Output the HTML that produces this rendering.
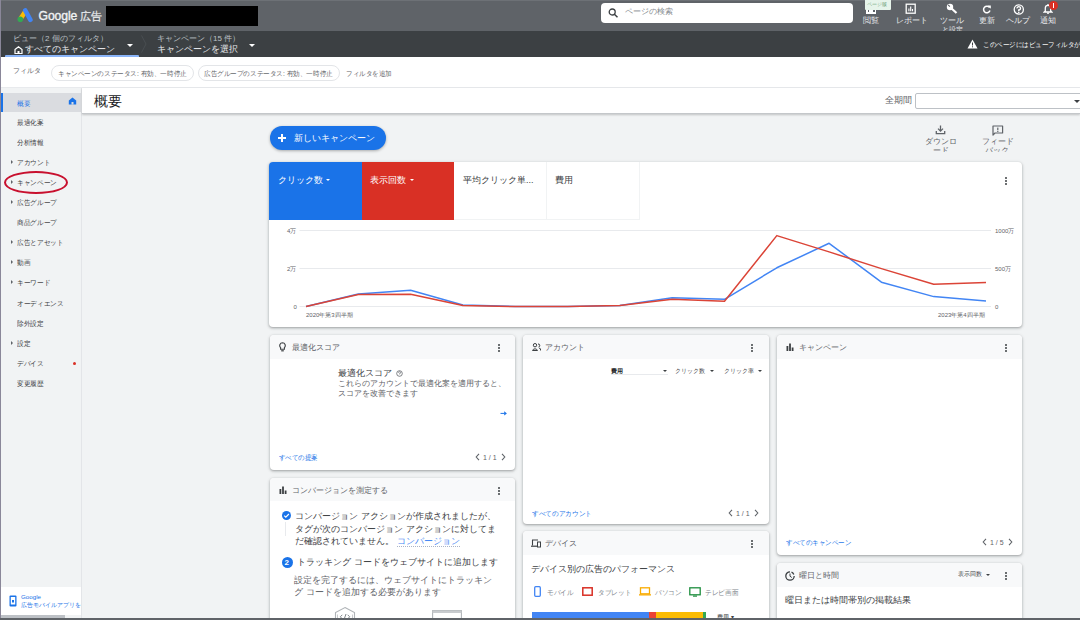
<!DOCTYPE html>
<html><head><meta charset="utf-8">
<style>
*{box-sizing:border-box;margin:0;padding:0}
html,body{width:1080px;height:620px;overflow:hidden;background:#f1f3f4;font-family:"Liberation Sans",sans-serif;color:#3c4043;position:relative}
div,span,svg{position:absolute}
.t{white-space:nowrap;line-height:1}
#top{left:0;top:0;width:1080px;height:31px;background:#5f6368}
#sub{left:0;top:31px;width:1080px;height:26px;background:#3c4043}
#filt{left:0;top:57px;width:1080px;height:31px;background:#fff;border-bottom:1px solid #e8eaed}
#side{left:0;top:88px;width:82px;height:532px;background:#f1f3f4;border-right:1px solid #e3e5e8}
#title{left:82px;top:88px;width:998px;height:26px;background:#fff;border-bottom:1px solid #c4c7ca;box-shadow:0 1px 2px rgba(0,0,0,.2)}
.card{background:#fff;border-radius:4px;box-shadow:0 1px 2px rgba(60,64,67,.3),0 1px 3px 1px rgba(60,64,67,.15);overflow:hidden}
.hd{left:0;top:0;right:0;height:23.5px;background:#f8f9fa}
.hdt{font-size:8.3px;color:#5f6368;top:8px}
.menu{width:2px;height:9px;top:8px}
.menu i{position:absolute;left:0;width:2.2px;height:2.2px;border-radius:50%;background:#3c4043}
.chip{height:16px;border:1px solid #e3e5e8;border-radius:8px}
.sx{transform-origin:0 0}
.nav{left:17px;font-size:6.5px;color:#3c4043;transform:scaleX(.95);transform-origin:0 0}
.arr{left:11px;width:0;height:0;border-left:2.5px solid #5f6368;border-top:2px solid transparent;border-bottom:2px solid transparent}
.hl{font-size:8px;color:#e8eaed;top:17px}
.link{color:#1a73e8}
</style></head><body>
<!-- top bar -->
<div id="top"></div>
<div style="left:0;top:0;width:1080px;height:1px;background:#6d7176"></div>
<svg style="left:17px;top:8px" width="17" height="16" viewBox="0 0 17 16">
 <path d="M6.2 2.6 L1.6 9.6 L5.5 12 L9.8 5.2 Z" fill="#fbbc04"/>
 <path d="M8.2 2.4 L13.4 11.8" stroke="#4285f4" stroke-width="4.6" stroke-linecap="round"/>
 <circle cx="3.3" cy="11.2" r="2.8" fill="#34a853"/>
</svg>
<div class="t" style="left:38.5px;top:9.5px;font-size:12.2px;color:#f1f3f4;-webkit-text-stroke:0.35px #f1f3f4;letter-spacing:-0.1px">Google</div><div class="t" style="left:80px;top:10.5px;font-size:11px;color:#e8eaed;-webkit-text-stroke:0.2px #e8eaed">広告</div>
<div style="left:106px;top:6px;width:152px;height:20px;background:#000"></div>
<div style="left:601px;top:3px;width:252px;height:20px;background:#fff;border-radius:4px"></div>
<svg style="left:608px;top:8px" width="11" height="10" viewBox="0 0 11 10"><circle cx="4.2" cy="4" r="3" stroke="#3c4043" stroke-width="1.3" fill="none"/><path d="M6.4 6.2 L9.5 9.2" stroke="#3c4043" stroke-width="1.5"/></svg>
<div class="t" style="left:625px;top:8px;font-size:8px;color:#80868b">ページの検索</div>
<!-- header icons -->
<div style="left:866px;top:9px;width:10px;height:5px;background:#fff"></div>
<div style="left:867.5px;top:9.5px;width:1.8px;height:2px;background:#5f6368"></div>
<div style="left:873px;top:9.5px;width:1.8px;height:2px;background:#5f6368"></div>
<div style="left:865px;top:0;width:26px;height:9.5px;background:#e6f4ea;border-radius:0 0 1px 1px"></div>
<div class="t" style="left:867px;top:2px;font-size:5px;color:#5f9a6e">ページ版</div>
<div class="t hl" style="left:863px">閲覧</div>
<svg style="left:905px;top:3px" width="12" height="11" viewBox="0 0 12 11"><rect x="1.2" y="1.2" width="9" height="9" stroke="#fff" stroke-width="1.3" fill="none"/><path d="M3.9 8.3V5.5M5.7 8.3V3.5M7.5 8.3V6" stroke="#fff" stroke-width="1.1"/></svg>
<div class="t hl" style="left:896px">レポート</div>
<svg style="left:946px;top:2.5px" width="12" height="11" viewBox="0 0 12 11"><circle cx="4" cy="4" r="3.2" fill="#fff"/><path d="M2.2 1.8 L3.8 3.6" stroke="#5f6368" stroke-width="1.1"/><path d="M5 5 L10.5 10" stroke="#fff" stroke-width="2.2"/></svg>
<div class="t hl" style="left:940px">ツール</div>
<div class="t" style="left:942px;top:26px;font-size:7px;color:#e8eaed">と設定</div>
<svg style="left:982px;top:4.5px" width="10" height="9" viewBox="0 0 10 9"><path d="M7.6 2.6 A3.3 3.3 0 1 0 8 5.5" stroke="#fff" stroke-width="1.5" fill="none"/><path d="M5.6 0.6 L8.8 0.6 L8.8 3.8 Z" fill="#fff"/></svg>
<div class="t hl" style="left:979px">更新</div>
<svg style="left:1012.5px;top:3.5px" width="12" height="11" viewBox="0 0 12 11"><circle cx="5.8" cy="5.5" r="4.6" stroke="#fff" stroke-width="1.3" fill="none"/><path d="M4.1 4.4 A1.7 1.7 0 1 1 5.8 6 V6.9" stroke="#fff" stroke-width="1.4" fill="none"/><circle cx="5.8" cy="8.4" r=".8" fill="#fff"/></svg>
<div class="t hl" style="left:1006px">ヘルプ</div>
<svg style="left:1043px;top:3px" width="10" height="11" viewBox="0 0 10 11"><path d="M2.3 8 V5 A2.7 2.7 0 0 1 7.7 5 V8 L8.8 9 H1.2 Z" stroke="#fff" stroke-width="1.3" fill="none"/><circle cx="5" cy="10.2" r=".9" fill="#fff"/><rect x="4.4" y="1" width="1.2" height="1.5" fill="#fff"/></svg>
<div style="left:1049px;top:1px;width:9px;height:9px;border-radius:50%;background:#d93025"></div>
<div style="left:1053px;top:3px;width:1.2px;height:3.5px;background:#fff"></div>
<div style="left:1053px;top:7px;width:1.2px;height:1.2px;background:#fff"></div>
<div class="t hl" style="left:1040px">通知</div>
<!-- sub bar -->
<div id="sub"></div>
<div class="t" style="left:13px;top:35px;font-size:8px;color:#bdc1c6">ビュー（2 個のフィルタ）</div>
<svg style="left:14px;top:46px" width="9" height="8" viewBox="0 0 9 8"><path d="M1 3.5 L4.5 0.8 L8 3.5 V7.5 H1 Z" stroke="#fff" stroke-width="1.2" fill="none"/><rect x="3.5" y="5" width="2" height="2.5" fill="#fff"/></svg>
<div class="t" style="left:25px;top:45px;font-size:9px;color:#e8eaed">すべてのキャンペーン</div>
<div style="left:127px;top:44px;width:0;height:0;border-left:3px solid transparent;border-right:3px solid transparent;border-top:3px solid #fff"></div>
<svg style="left:141px;top:35px" width="6" height="18" viewBox="0 0 6 18"><path d="M0.5 0.5 L5 9 L0.5 17.5" stroke="#4a4e52" stroke-width="1" fill="none"/></svg>
<div class="t" style="left:157px;top:35px;font-size:8px;color:#bdc1c6">キャンペーン（15 件）</div>
<div class="t" style="left:157px;top:45px;font-size:9px;color:#e8eaed">キャンペーンを選択</div>
<div style="left:249px;top:44px;width:0;height:0;border-left:3px solid transparent;border-right:3px solid transparent;border-top:3px solid #fff"></div>
<div style="left:5px;top:55px;width:134px;height:2px;background:#8ab4f8;border-radius:1px 1px 0 0"></div>
<svg style="left:967px;top:39px" width="11" height="10" viewBox="0 0 11 10"><path d="M5.5 0.5 L10.5 9.5 H0.5 Z" fill="#fff"/><rect x="5" y="3.5" width="1" height="3" fill="#3c4043"/><rect x="5" y="7.3" width="1" height="1" fill="#3c4043"/></svg>
<div class="t sx" style="left:983px;top:40.5px;font-size:7px;color:#fff;transform:scaleX(.93)">このページにはビューフィルタが適用されています</div>
<!-- filter bar -->
<div id="filt"></div>
<div class="t" style="left:13px;top:67px;font-size:7px;color:#5f6368">フィルタ</div>
<div class="chip" style="left:51px;top:65px;width:143px"></div><div class="t sx" style="left:58px;top:69.5px;font-size:7px;color:#5f6368;transform:scaleX(.94)">キャンペーンのステータス: 有効、一時停止</div>
<div class="chip" style="left:198px;top:65px;width:142px"></div><div class="t sx" style="left:204px;top:69.5px;font-size:7px;color:#5f6368;transform:scaleX(.94)">広告グループのステータス: 有効、一時停止</div>
<div class="t sx" style="left:346px;top:69.5px;font-size:7px;color:#5f6368;transform:scaleX(.93)">フィルタを追加</div>

<!-- sidebar -->
<div id="side"></div>
<div style="left:1px;top:93px;width:80px;height:19px;background:#dadce0"></div>
<div style="left:1px;top:93px;width:2px;height:19px;background:#1a73e8"></div>
<div style="left:0;top:0;width:1px;height:620px;background:#8a8799"></div>
<div class="t nav link" style="top:100px;font-size:7px">概要</div>
<svg style="left:68px;top:97px" width="9" height="8" viewBox="0 0 9 8"><path d="M0.8 3.6 L4.5 0.6 L8.2 3.6 V7.6 H0.8 Z" fill="#1a73e8"/><rect x="3.5" y="5" width="2" height="2.6" fill="#dadce0"/></svg>
<div class="t nav" style="top:120px">最適化案</div>
<div class="t nav" style="top:140px">分析情報</div>
<div class="arr" style="top:160px"></div><div class="t nav" style="top:160px">アカウント</div>
<div class="arr" style="top:180px"></div><div class="t nav" style="top:180px">キャンペーン</div>
<div style="left:4px;top:171px;width:64px;height:23px;border:2.2px solid #c8102e;border-radius:50%"></div>
<div class="arr" style="top:200px"></div><div class="t nav" style="top:200px">広告グループ</div>
<div class="t nav" style="top:220px">商品グループ</div>
<div class="arr" style="top:240px"></div><div class="t nav" style="top:240px">広告とアセット</div>
<div class="arr" style="top:260px"></div><div class="t nav" style="top:260px">動画</div>
<div class="arr" style="top:280px"></div><div class="t nav" style="top:280px">キーワード</div>
<div class="t nav" style="top:301px">オーディエンス</div>
<div class="t nav" style="top:321px">除外設定</div>
<div class="arr" style="top:341px"></div><div class="t nav" style="top:341px">設定</div>
<div class="t nav" style="top:361px">デバイス</div>
<div style="left:73px;top:362px;width:3px;height:3px;border-radius:50%;background:#d93025"></div>
<div class="t nav" style="top:381px">変更履歴</div>
<div style="left:1px;top:587px;width:80px;height:28px;background:#fff"></div>
<svg style="left:9px;top:595px" width="8" height="12" viewBox="0 0 8 12"><rect x="0.5" y="0.5" width="7" height="11" rx="1" fill="#1a73e8"/><rect x="1.8" y="2" width="4.4" height="7.5" fill="#fff"/><rect x="3" y="5" width="2" height="2.5" fill="#1a73e8"/></svg>
<div class="t link" style="left:21px;top:593.5px;font-size:6.2px">Google</div>
<div style="left:21px;top:600px;width:60px;height:10px;overflow:hidden"><div class="t link" style="left:0;top:1.5px;font-size:6px">広告モバイルアプリを</div></div>
<div style="left:1px;top:615px;width:64px;height:3px;background:#bdc1c6"></div>


<!-- title bar -->
<div id="title"></div>
<div class="t" style="left:94px;top:94px;font-size:14px;color:#202124">概要</div>
<div class="t" style="left:885px;top:96px;font-size:9px;color:#5f6368">全期間</div>
<div style="left:915px;top:93px;width:170px;height:16px;border:1px solid #bdc1c6;border-radius:2px;background:#fff"></div>
<div style="left:1074px;top:100px;width:0;height:0;border-left:3px solid transparent;border-right:3px solid transparent;border-top:3px solid #3c4043"></div>


<!-- action row -->
<div style="left:269.5px;top:126px;width:116px;height:24px;border-radius:12px;background:#1a73e8;box-shadow:0 1px 3px rgba(0,0,0,.3)"></div>
<div style="left:278px;top:137px;width:8px;height:1.6px;background:#fff"></div>
<div style="left:281.2px;top:134px;width:1.6px;height:8px;background:#fff"></div>
<div class="t" style="left:294px;top:133.5px;font-size:9px;color:#fff">新しいキャンペーン</div>
<svg style="left:935px;top:125px" width="11" height="10" viewBox="0 0 11 10"><path d="M5.5 0.5 V5.8 M3 3.6 L5.5 6.1 L8 3.6" stroke="#5f6368" stroke-width="1.3" fill="none"/><path d="M1.3 6 V8.6 H9.7 V6" stroke="#5f6368" stroke-width="1.3" fill="none"/></svg>
<div class="t" style="left:925px;top:138px;font-size:7.5px;color:#5f6368">ダウンロ</div>
<div style="left:925px;top:147px;width:40px;height:4.5px;overflow:hidden"><div class="t" style="left:8px;top:0;font-size:7.5px;color:#5f6368">ード</div></div>
<svg style="left:992px;top:124.5px" width="12" height="11" viewBox="0 0 12 11"><path d="M1 1 H10.6 V8 H3 L1 10 Z" stroke="#5f6368" stroke-width="1.2" fill="none" stroke-linejoin="round"/><rect x="5.2" y="2.6" width="1.2" height="2.6" fill="#5f6368"/><rect x="5.2" y="5.9" width="1.2" height="1.1" fill="#5f6368"/></svg>
<div class="t" style="left:982px;top:138px;font-size:7.5px;color:#5f6368">フィード</div>
<div style="left:980px;top:147px;width:40px;height:4.5px;overflow:hidden"><div class="t" style="left:5px;top:0;font-size:7.5px;color:#5f6368">バック</div></div>

<!-- chart card -->
<div class="card" style="left:269px;top:162px;width:753px;height:165px">
 <div style="left:0;top:0;width:93px;height:58px;background:#1a73e8"></div>
 <div style="left:93px;top:0;width:92px;height:58px;background:#d93025"></div>
 <div style="left:277px;top:0;width:1px;height:58px;background:#f1f3f4"></div>
 <div style="left:370px;top:0;width:1px;height:58px;background:#f1f3f4"></div>
 <div style="left:185px;top:57px;width:186px;height:1px;background:#f1f3f4"></div>
 <div class="t" style="left:9px;top:14px;font-size:9px;color:#fff">クリック数</div>
 <div style="left:57px;top:16.5px;border-left:2.6px solid transparent;border-right:2.6px solid transparent;border-top:2.6px solid #fff"></div>
 <div class="t" style="left:101px;top:14px;font-size:9px;color:#fff">表示回数</div>
 <div style="left:140.5px;top:16.5px;border-left:2.6px solid transparent;border-right:2.6px solid transparent;border-top:2.6px solid #fff"></div>
 <div class="t" style="left:194px;top:14px;font-size:9px;color:#3c4043">平均クリック単...</div>
 <div class="t" style="left:286px;top:14px;font-size:9px;color:#3c4043">費用</div>
 <div class="menu" style="left:736px;top:14px"><i style="top:0.5px"></i><i style="top:3.7px"></i><i style="top:6.9px"></i></div>
 <svg style="left:0;top:0" width="753" height="165" viewBox="0 0 753 165">
  <g stroke="#e8eaed" stroke-width="1"><path d="M30.5 68.5 H722 M30.5 106.5 H722 M30.5 144.5 H722"/></g>
  <polyline fill="none" stroke="#4285f4" stroke-width="1.5" stroke-linejoin="round" points="37.0,144.5 89.3,132.0 141.6,128.3 193.9,143.0 246.2,144.5 298.5,144.5 350.8,143.6 403.2,135.8 455.5,137.3 507.8,105.8 560.1,81.3 612.4,120.2 664.7,134.6 717.0,138.9"/>
  <polyline fill="none" stroke="#db4437" stroke-width="1.5" stroke-linejoin="round" points="37.0,144.5 89.3,132.5 141.6,132.3 193.9,143.6 246.2,144.5 298.5,144.5 350.8,143.6 403.2,137.3 455.5,139.3 507.8,73.6 560.1,89.9 612.4,106.6 664.7,122.2 717.0,120.6"/>
 </svg>
 <div class="t" style="left:18px;top:65.5px;font-size:6px;color:#5f6368">4万</div>
 <div class="t" style="left:18px;top:103.5px;font-size:6px;color:#5f6368">2万</div>
 <div class="t" style="left:24.5px;top:141.5px;font-size:6px;color:#5f6368">0</div>
 <div class="t" style="left:726px;top:65.5px;font-size:6px;color:#5f6368">1000万</div>
 <div class="t" style="left:726px;top:103.5px;font-size:6px;color:#5f6368">500万</div>
 <div class="t" style="left:726px;top:141.5px;font-size:6px;color:#5f6368">0</div>
 <div class="t" style="left:37px;top:150px;font-size:6px;color:#5f6368">2020年第3四半期</div>
 <div class="t" style="left:669px;top:150px;font-size:6px;color:#5f6368">2023年第4四半期</div>
</div>

<!-- optimization score card -->
<div class="card" style="left:270px;top:335px;width:245px;height:135px">
 <div class="hd"></div>
 <svg style="left:9px;top:7px" width="7" height="10" viewBox="0 0 7 10"><path d="M3.5 0.8 A2.8 2.8 0 0 0 1.6 5.6 V7.2 H5.4 V5.6 A2.8 2.8 0 0 0 3.5 0.8 Z" stroke="#3c4043" stroke-width="1.1" fill="none"/><rect x="2.2" y="8.2" width="2.6" height="1.2" fill="#3c4043"/></svg>
 <div class="t hdt" style="left:22px">最適化スコア</div>
 <div class="menu" style="left:228px"><i style="top:0.5px"></i><i style="top:3.7px"></i><i style="top:6.9px"></i></div>
 <div class="t" style="left:68px;top:34px;font-size:9px;color:#3c4043">最適化スコア</div>
 <svg style="left:126px;top:35px" width="7" height="7" viewBox="0 0 7 7"><circle cx="3.5" cy="3.5" r="2.8" stroke="#5f6368" stroke-width=".8" fill="none"/><path d="M2.5 2.7 A1 1 0 1 1 3.5 3.7 V4.3" stroke="#5f6368" stroke-width=".7" fill="none"/></svg>
 <div class="t" style="left:68px;top:45px;font-size:8px;color:#5f6368">これらのアカウントで最適化案を適用すると、</div>
 <div class="t" style="left:68px;top:55px;font-size:8px;color:#5f6368">スコアを改善できます</div>
 <svg style="left:230px;top:75px" width="8" height="6" viewBox="0 0 8 6"><path d="M0.5 3.4 H4.5" stroke="#1a73e8" stroke-width="1"/><path d="M4.2 1.2 L6.9 3.4 L4.2 5.6 Z" fill="#1a73e8"/></svg>
 <div class="t link sx" style="left:9px;top:119px;font-size:7px;transform:scaleX(.92)">すべての提案</div>
 <svg style="left:205px;top:118px" width="5" height="8" viewBox="0 0 5 8"><path d="M4 0.8 L1.2 4 L4 7.2" stroke="#5f6368" stroke-width="1.1" fill="none"/></svg><div class="t" style="left:213px;top:119px;font-size:7px;color:#5f6368">1 / 1</div><svg style="left:231px;top:118px" width="5" height="8" viewBox="0 0 5 8"><path d="M1 0.8 L3.8 4 L1 7.2" stroke="#5f6368" stroke-width="1.1" fill="none"/></svg>
</div>

<!-- account card -->
<div class="card" style="left:523px;top:335px;width:246px;height:189px">
 <div class="hd"></div>
 <svg style="left:9px;top:8px" width="9" height="8" viewBox="0 0 9 8"><circle cx="3" cy="2.2" r="1.7" stroke="#3c4043" stroke-width="1" fill="none"/><path d="M0.5 7.5 A2.7 2.7 0 0 1 5.5 7.5 Z" stroke="#3c4043" stroke-width="1" fill="none"/><path d="M6 1 A1.4 1.4 0 0 1 6.5 4 M7 5 A2 2 0 0 1 8.6 7.5" stroke="#3c4043" stroke-width="1" fill="none"/></svg>
 <div class="t hdt" style="left:22px">アカウント</div>
 <div class="menu" style="left:228px"><i style="top:0.5px"></i><i style="top:3.7px"></i><i style="top:6.9px"></i></div>
 <div class="t" style="left:88px;top:33px;font-size:6px;color:#202124;font-weight:bold">費用</div>
 <div style="left:140px;top:35px;border-left:2.5px solid transparent;border-right:2.5px solid transparent;border-top:2.5px solid #3c4043"></div>
 <div style="left:88px;top:39px;width:57px;height:1px;background:#e8eaed"></div>
 <div class="t" style="left:152px;top:33px;font-size:6px;color:#3c4043">クリック数</div>
 <div style="left:187px;top:35px;border-left:2.5px solid transparent;border-right:2.5px solid transparent;border-top:2.5px solid #3c4043"></div>
 <div class="t" style="left:201px;top:33px;font-size:6px;color:#3c4043">クリック率</div>
 <div style="left:235px;top:35px;border-left:2.5px solid transparent;border-right:2.5px solid transparent;border-top:2.5px solid #3c4043"></div>
 <div class="t link sx" style="left:9px;top:175px;font-size:7px;transform:scaleX(.95)">すべてのアカウント</div>
 <svg style="left:205px;top:174px" width="5" height="8" viewBox="0 0 5 8"><path d="M4 0.8 L1.2 4 L4 7.2" stroke="#5f6368" stroke-width="1.1" fill="none"/></svg><div class="t" style="left:213px;top:175px;font-size:7px;color:#5f6368">1 / 1</div><svg style="left:231px;top:174px" width="5" height="8" viewBox="0 0 5 8"><path d="M1 0.8 L3.8 4 L1 7.2" stroke="#5f6368" stroke-width="1.1" fill="none"/></svg>
</div>

<!-- campaign card -->
<div class="card" style="left:777px;top:335px;width:245px;height:220px">
 <div class="hd"></div>
 <svg style="left:9px;top:8px" width="8" height="8" viewBox="0 0 8 8"><rect x="0.5" y="3" width="1.8" height="5" fill="#3c4043"/><rect x="3.1" y="0.5" width="1.8" height="7.5" fill="#3c4043"/><rect x="5.7" y="4.5" width="1.8" height="3.5" fill="#3c4043"/></svg>
 <div class="t hdt" style="left:22px">キャンペーン</div>
 <div class="menu" style="left:228px"><i style="top:0.5px"></i><i style="top:3.7px"></i><i style="top:6.9px"></i></div>
 <div class="t link sx" style="left:8.5px;top:204px;font-size:7px;transform:scaleX(.93)">すべてのキャンペーン</div>
 <svg style="left:205px;top:203px" width="5" height="8" viewBox="0 0 5 8"><path d="M4 0.8 L1.2 4 L4 7.2" stroke="#5f6368" stroke-width="1.1" fill="none"/></svg><div class="t" style="left:213px;top:204px;font-size:7px;color:#5f6368">1 / 5</div><svg style="left:231px;top:203px" width="5" height="8" viewBox="0 0 5 8"><path d="M1 0.8 L3.8 4 L1 7.2" stroke="#5f6368" stroke-width="1.1" fill="none"/></svg>
</div>

<!-- conversion card -->
<div class="card" style="left:270px;top:478px;width:245px;height:150px">
 <div class="hd" style="height:23px"></div>
 <svg style="left:9px;top:8px" width="8" height="8" viewBox="0 0 8 8"><rect x="0.5" y="3" width="1.8" height="5" fill="#3c4043"/><rect x="3.1" y="0.5" width="1.8" height="7.5" fill="#3c4043"/><rect x="5.7" y="4.5" width="1.8" height="3.5" fill="#3c4043"/></svg>
 <div class="t hdt" style="left:22px">コンバージョンを測定する</div>
 <div class="menu" style="left:228px"><i style="top:0.5px"></i><i style="top:3.7px"></i><i style="top:6.9px"></i></div>
 <svg style="left:12px;top:33px" width="9" height="9" viewBox="0 0 9 9"><circle cx="4.5" cy="4.5" r="4.5" fill="#1a73e8"/><path d="M2.2 4.6 L3.8 6.1 L6.9 3" stroke="#fff" stroke-width="1.2" fill="none"/></svg>
 <div style="left:15px;top:44px;width:1px;height:14px;background:#e8eaed"></div>
 <div class="t" style="left:25px;top:34px;font-size:9px;color:#3c4043">コンバージョン アクションが作成されましたが、</div>
 <div class="t" style="left:25px;top:47px;font-size:9px;color:#3c4043">タグが次のコンバージョン アクションに対してま</div>
 <div class="t" style="left:25px;top:59px;font-size:9px;color:#3c4043">だ確認されていません。</div>
 <div class="t link" style="left:127px;top:59px;font-size:9px;color:#4285f4">コンバージョン</div>
 <div style="left:127px;top:68px;width:63px;height:0;border-top:1px dotted #aab4c8"></div>
 <svg style="left:11.5px;top:79px" width="11" height="11" viewBox="0 0 11 11"><circle cx="5.5" cy="5.5" r="5.5" fill="#1a73e8"/></svg>
 <div class="t" style="left:14.6px;top:81px;font-size:8px;color:#fff;font-weight:bold">2</div>
 <div class="t" style="left:27px;top:80px;font-size:9px;color:#3c4043">トラッキング コードをウェブサイトに追加します</div>
 <div class="t" style="left:24px;top:97.5px;font-size:9px;color:#5f6368">設定を完了するには、ウェブサイトにトラッキン</div>
 <div class="t" style="left:24px;top:109.5px;font-size:9px;color:#5f6368">グ コードを追加する必要があります</div>
 <svg style="left:64px;top:128px" width="24" height="20" viewBox="0 0 24 20"><path d="M11 1.5 L20.5 6.5 V14 L11 19 L1.5 14 V6.5 Z" stroke="#b0b4b8" stroke-width="1.1" fill="none"/><path d="M3.5 8.5 V12.5 M18.5 8.5 V12.5" stroke="#c8cbce" stroke-width="1"/><path d="M8.3 8.8 L6.3 10.8 L8.3 12.8 M13.7 8.8 L15.7 10.8 L13.7 12.8 M12 8 L10 13.6" stroke="#80868b" stroke-width="1" fill="none"/></svg>
 <svg style="left:162px;top:131.5px" width="30" height="16" viewBox="0 0 30 16"><rect x="0.6" y="0.6" width="28.8" height="18" stroke="#b0b4b8" stroke-width="1.1" fill="none"/><rect x="0.6" y="0.6" width="28.8" height="2.4" fill="#c8cbce"/><path d="M12 9 L10 11 L12 13 M17 9 L19 11 L17 13 M15.3 8.2 L13.7 13.8" stroke="#9aa0a6" stroke-width="1" fill="none"/></svg>
</div>

<!-- device card -->
<div class="card" style="left:523px;top:531px;width:246px;height:100px">
 <div class="hd"></div>
 <svg style="left:8px;top:8px" width="10" height="9" viewBox="0 0 10 9"><path d="M1.5 6.5 V1 H7" stroke="#3c4043" stroke-width="1.1" fill="none"/><rect x="0" y="6.6" width="6" height="1.2" fill="#3c4043"/><rect x="6.5" y="3" width="3" height="5" stroke="#3c4043" stroke-width="1" fill="none"/></svg>
 <div class="t hdt" style="left:22px">デバイス</div>
 <div class="menu" style="left:228px"><i style="top:0.5px"></i><i style="top:3.7px"></i><i style="top:6.9px"></i></div>
 <div class="t" style="left:8px;top:34px;font-size:9px;color:#3c4043">デバイス別の広告のパフォーマンス</div>
 <svg style="left:11px;top:55px" width="7" height="11" viewBox="0 0 7 11"><rect x="0.7" y="0.7" width="5.6" height="9.6" rx="1" stroke="#4285f4" stroke-width="1.3" fill="none"/></svg>
 <div class="t" style="left:24px;top:57.5px;font-size:7px;color:#80868b;transform:scaleX(.95);transform-origin:0 0">モバイル</div>
 <svg style="left:59px;top:56px" width="11" height="9" viewBox="0 0 11 9"><rect x="0.8" y="0.8" width="9.4" height="7.4" stroke="#d93025" stroke-width="1.5" fill="none"/></svg>
 <div class="t" style="left:75px;top:57.5px;font-size:7px;color:#80868b;transform:scaleX(.95);transform-origin:0 0">タブレット</div>
 <svg style="left:116px;top:56px" width="12" height="9" viewBox="0 0 12 9"><rect x="1.5" y="0.8" width="9" height="6" stroke="#f9ab00" stroke-width="1.3" fill="none"/><rect x="0" y="7.2" width="12" height="1.3" fill="#f9ab00"/></svg>
 <div class="t" style="left:132px;top:57.5px;font-size:7px;color:#80868b;transform:scaleX(.95);transform-origin:0 0">パソコン</div>
 <svg style="left:166px;top:56px" width="12" height="10" viewBox="0 0 12 10"><rect x="0.8" y="0.8" width="10.4" height="7" stroke="#1e8e3e" stroke-width="1.3" fill="none"/><rect x="4" y="8.5" width="4" height="1.2" fill="#1e8e3e"/></svg>
 <div class="t" style="left:182px;top:57.5px;font-size:7px;color:#80868b;transform:scaleX(.95);transform-origin:0 0">テレビ画面</div>
 <div style="left:9px;top:81px;width:117px;height:10px;background:#4285f4"></div>
 <div style="left:126px;top:81px;width:7px;height:10px;background:#ea4335"></div>
 <div style="left:133px;top:81px;width:47px;height:10px;background:#fbbc04"></div>
 <div style="left:180px;top:81px;width:3px;height:10px;background:#34a853"></div>
 <div class="t" style="left:194px;top:83px;font-size:6px;color:#3c4043">費用 ▾</div>
</div>

<!-- day & time card -->
<div class="card" style="left:777px;top:563px;width:245px;height:70px">
 <div class="hd"></div>
 <svg style="left:8px;top:8px" width="10" height="10" viewBox="0 0 10 10"><path d="M5 0.8 A4.2 4.2 0 1 0 9.2 5" stroke="#3c4043" stroke-width="1.3" fill="none"/><path d="M5 2.5 V5.2 L6.8 6.5" stroke="#3c4043" stroke-width="1" fill="none"/><path d="M6.5 1.2 A4 4 0 0 1 8.8 3.5" stroke="#3c4043" stroke-width="1.3" fill="none"/></svg>
 <div class="t hdt" style="left:22px">曜日と時間</div>
 <div class="t" style="left:181px;top:8px;font-size:6px;color:#3c4043">表示回数</div>
 <div style="left:209px;top:11px;border-left:2.5px solid transparent;border-right:2.5px solid transparent;border-top:2.5px solid #3c4043"></div>
 <div class="menu" style="left:228px"><i style="top:0.5px"></i><i style="top:3.7px"></i><i style="top:6.9px"></i></div>
 <div class="t" style="left:8px;top:33px;font-size:9px;color:#3c4043">曜日または時間帯別の掲載結果</div>
</div>

<!-- bottom -->
<div style="left:0;top:618px;width:1080px;height:2px;background:#5f6368"></div>
</body></html>
